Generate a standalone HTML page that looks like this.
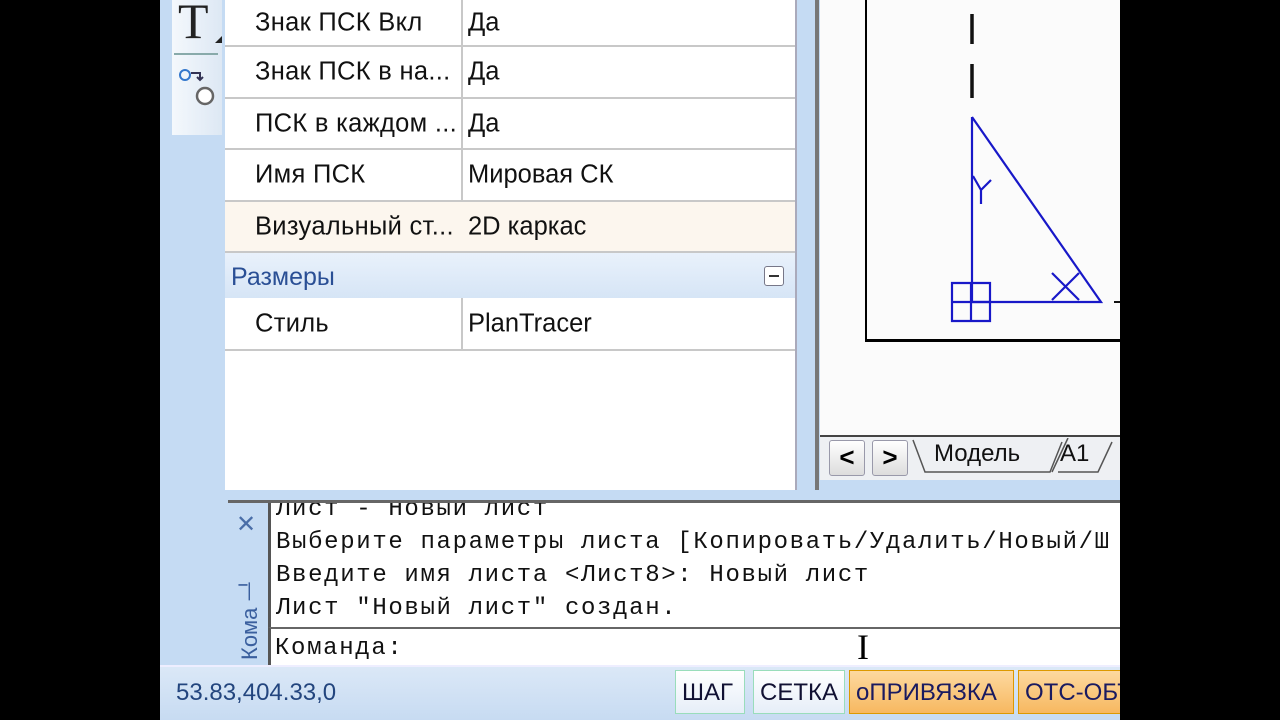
<!DOCTYPE html>
<html><head><meta charset="utf-8"><style>
*{margin:0;padding:0;box-sizing:border-box}
body{width:1280px;height:720px;background:#000;position:relative;overflow:hidden;font-family:"Liberation Sans",sans-serif}
.a{position:absolute}
.row{position:absolute;left:225px;width:570px;border-bottom:2px solid #c8c8c8;font-size:25.5px;color:#111}
.row span{position:absolute;top:50%;transform:translateY(-50%)}
.k{left:30px;letter-spacing:0.3px}.v{left:243px}
.mono{font-family:"Liberation Mono","DejaVu Sans Mono",monospace;font-size:24px;color:#111;letter-spacing:1.65px}
.btn{position:absolute;top:670px;height:44px;border:1px solid #9db;background:linear-gradient(#fff,#e6eef8);font-size:24px;color:#113;padding:8px 6px 0}
</style></head><body>
<div class="a" style="left:160px;top:0;width:960px;height:720px;background:#c5dbf3"></div>
<!-- left toolbar -->
<div class="a" style="left:172px;top:0;width:50px;height:135px;background:linear-gradient(90deg,#f4f8fc,#dde8f4)"></div>
<div class="a" style="left:178px;top:-8px;font-family:'Liberation Serif',serif;font-size:50px;color:#222">T</div>
<div class="a" style="left:215px;top:36px;width:0;height:0;border-left:7px solid transparent;border-bottom:7px solid #222"></div>
<div class="a" style="left:174px;top:53px;width:44px;height:2px;background:#8aa"></div>
<svg class="a" style="left:174px;top:62px" width="48" height="48"><circle cx="11" cy="13" r="5" fill="none" stroke="#37c" stroke-width="2"/><path d="M17 11h9v6M23 15l3 3 3-3" fill="none" stroke="#335" stroke-width="2"/><circle cx="31" cy="34" r="8" fill="#fff" stroke="#666" stroke-width="2.5"/></svg>
<!-- properties panel -->
<div class="a" style="left:225px;top:0;width:572px;height:490px;background:#fff;border-right:2px solid #aab"></div>
<div class="a" style="left:461px;top:0;width:2px;height:253px;background:#c8c8c8"></div>
<div class="row" style="top:0;height:47px"><span class="k">Знак ПСК Вкл</span><span class="v">Да</span></div>
<div class="row" style="top:47px;height:52px"><span class="k">Знак ПСК в на...</span><span class="v">Да</span></div>
<div class="row" style="top:99px;height:51px"><span class="k">ПСК в каждом ...</span><span class="v">Да</span></div>
<div class="row" style="top:150px;height:52px"><span class="k">Имя ПСК</span><span class="v">Мировая СК</span></div>
<div class="row" style="top:202px;height:51px;background:#fcf6ee"><span class="k">Визуальный ст...</span><span class="v">2D каркас</span></div>
<div class="a" style="left:225px;top:253px;width:570px;height:45px;background:linear-gradient(#e9f1fb,#d6e5f6);font-size:25px;color:#2a4f95;padding:10px 6px">Размеры</div>
<div class="a" style="left:764px;top:266px;width:20px;height:20px;border:1px solid #778;border-radius:3px;background:#fff"><div style="margin:8px 4px;height:2px;background:#333"></div></div>
<div class="row" style="top:298px;height:53px"><span class="k">Стиль</span><span class="v">PlanTracer</span></div>
<div class="a" style="left:461px;top:298px;width:2px;height:53px;background:#c8c8c8"></div>
<!-- drawing area -->
<div class="a" style="left:815px;top:0;width:4px;height:490px;background:#777"></div>
<div class="a" style="left:820px;top:0;width:300px;height:435px;background:#fbfbfb"></div>
<div class="a" style="left:865px;top:0;width:260px;height:342px;border-left:2px solid #000;border-bottom:3px solid #000"></div>
<svg class="a" style="left:820px;top:0" width="300" height="340">
<path d="M152 14v30M152 64v34" stroke="#111" stroke-width="3.5"/>
<g stroke="#1818c8" stroke-width="2.2" fill="none">
<path d="M152 117v185h129L152 117"/><path d="M132 283h38v38h-38zM132 302h38M151 283v38"/>
<path d="M153 176l8 14 10-10M161 190v14"/><path d="M232 273l27 27M259 273l-27 27"/></g>
<path d="M294 302h8" stroke="#111" stroke-width="2"/></svg>
<!-- tabs -->
<div class="a" style="left:820px;top:435px;width:300px;height:45px;background:#eef0f3;border-top:2px solid #444"></div>
<div class="a" style="left:829px;top:440px;width:36px;height:36px;border:1px solid #99a;border-radius:3px;background:linear-gradient(#fff,#ddd);font-size:26px;text-align:center;line-height:32px;font-weight:bold">&lt;</div>
<div class="a" style="left:872px;top:440px;width:36px;height:36px;border:1px solid #99a;border-radius:3px;background:linear-gradient(#fff,#ddd);font-size:26px;text-align:center;line-height:32px;font-weight:bold">&gt;</div>
<div class="a" style="left:934px;top:440px;font-size:24px;color:#111">Модель</div>
<div class="a" style="left:1060px;top:440px;font-size:24px;color:#111">A1</div>
<svg class="a" style="left:908px;top:438px" width="212" height="40"><path d="M5 2l12 32h125l12-30M144 34l16-34M150 34h40l14-30" fill="none" stroke="#555" stroke-width="1.5"/></svg>
<!-- command window -->
<div class="a" style="left:228px;top:500px;width:892px;height:165px;background:#c5dbf3;border-top:3px solid #666"></div>
<div class="a" style="left:236px;top:510px;font-size:24px;color:#4a6ea8">✕</div>
<div class="a" style="left:232px;top:660px;transform:rotate(-90deg);transform-origin:0 0;font-size:22px;color:#3a5f9e;white-space:nowrap">Кома ᆜ</div>
<div class="a" style="left:268px;top:503px;width:852px;height:124px;background:#fff;border-left:3px solid #555;overflow:hidden">
<div class="mono" style="position:absolute;left:5px;top:-10px;line-height:33px;white-space:nowrap">Лист - Новый лист<br>Выберите параметры листа [Копировать/Удалить/Новый/Ш<br>Введите имя листа &lt;Лист8&gt;: Новый лист<br>Лист "Новый лист" создан.</div></div>
<div class="a" style="left:268px;top:627px;width:852px;height:38px;background:#fff;border-top:2px solid #666;border-left:3px solid #555"><div class="mono" style="position:absolute;left:4px;top:6px">Команда:</div></div>
<div class="a" style="left:857px;top:626px;font-family:'Liberation Serif',serif;font-size:36px;color:#000">I</div>
<!-- status bar -->
<div class="a" style="left:160px;top:665px;width:960px;height:55px;background:linear-gradient(#dbe8f7,#c7dbf2);border-top:2px solid #eef"></div>
<div class="a" style="left:176px;top:679px;font-size:24px;color:#23457e">53.83,404.33,0</div>
<div class="btn" style="left:675px;width:70px">ШАГ</div>
<div class="btn" style="left:753px;width:92px">СЕТКА</div>
<div class="btn" style="left:849px;width:165px;background:linear-gradient(#fdd9a0,#f7b860);border-color:#d90;color:#1a1a60">оПРИВЯЗКА</div>
<div class="btn" style="left:1018px;width:130px;background:linear-gradient(#fdd9a0,#f7b860);border-color:#d90;color:#1a1a60">ОТС-ОБЪ</div>
<div class="a" style="left:1120px;top:0;width:160px;height:720px;background:#000"></div>
</body></html>
